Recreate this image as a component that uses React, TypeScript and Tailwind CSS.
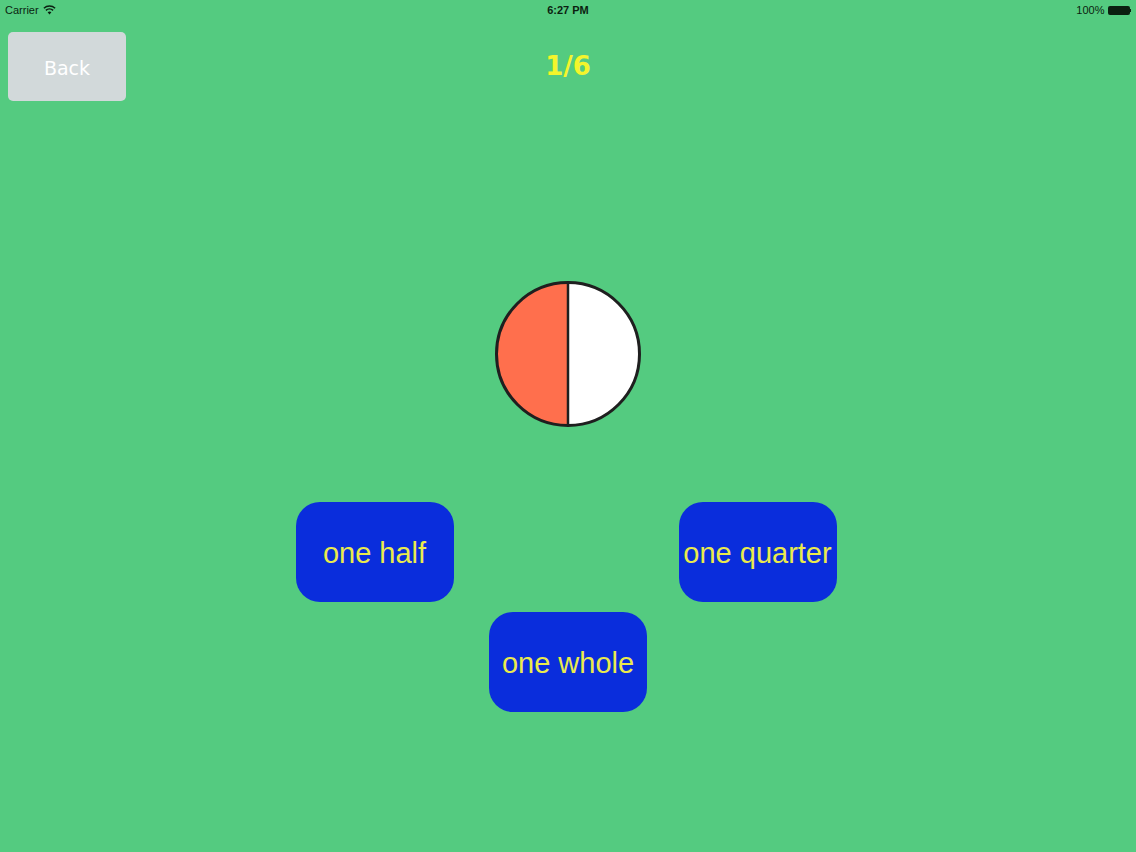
import React from 'react';

const choices = ['one half', 'one quarter'];

const StatusBar: React.FC = () => (
    <div className="h-[20px] grid grid-cols-[1fr_auto_1fr] items-center px-[5px] text-[11px] text-[#0b1f10] font-['Liberation_Sans',sans-serif]">
        <div className="flex items-center gap-[4px]">
            <span>Carrier</span>
            <svg width="13" height="10" viewBox="0 0 13 10">
                <path d="M6.5 9.5 L4.6 7.3 A3 3 0 0 1 8.4 7.3 Z" fill="#0b1f10" />
                <path d="M2.9 5.4 A5.3 5.3 0 0 1 10.1 5.4" stroke="#0b1f10" strokeWidth="1.5" fill="none" />
                <path d="M0.9 3.2 A8.2 8.2 0 0 1 12.1 3.2" stroke="#0b1f10" strokeWidth="1.5" fill="none" />
            </svg>
        </div>
        <div className="font-bold">6:27 PM</div>
        <div className="flex items-center justify-end gap-[3px]">
            <span>100%</span>
            <div className="flex items-center">
                <div className="w-[22px] h-[9px] bg-[#0b1f10] rounded-[2px]" />
                <div className="w-[1.5px] h-[3px] bg-[#0b1f10]" />
            </div>
        </div>
    </div>
);

const ChoiceButton: React.FC<{ label: string }> = ({ label }) => (
    <button className="w-[158px] h-[100px] pt-[4px] rounded-[24px] bg-[#0a2ddc] text-[#eaea4c] text-[29px] font-['Liberation_Sans',sans-serif] flex items-center justify-center whitespace-nowrap">
        {label}
    </button>
);

const App: React.FC = () => {
    return (
        <div className="w-[1136px] h-[852px] bg-[#54cb80] overflow-hidden">
            <StatusBar />

            {/* header */}
            <div className="grid grid-cols-[1fr_auto_1fr] items-start">
                <div>
                    <button className="ml-[8px] mt-[12px] w-[118px] h-[69px] pt-[3px] rounded-[5px] bg-[#d2d9da] text-white text-[19px] font-['DejaVu_Sans',sans-serif] flex items-center justify-center">
                        Back
                    </button>
                </div>
                <div className="mt-[32px] text-[26px] leading-[28px] font-bold text-[#f4f52c] font-['DejaVu_Sans',sans-serif]">
                    1/6
                </div>
                <div />
            </div>

            {/* fraction circle */}
            <div className="flex justify-center mt-[180px]">
                <svg width="146" height="146" viewBox="0 0 146 146">
                    <path d="M73 1.5 A71.5 71.5 0 0 0 73 144.5 Z" fill="#ff6f4d" />
                    <path d="M73 1.5 A71.5 71.5 0 0 1 73 144.5 Z" fill="#ffffff" />
                    <line x1="73" y1="1.5" x2="73" y2="144.5" stroke="#1f1f1f" strokeWidth="2.5" />
                    <circle cx="73" cy="73" r="71.5" fill="none" stroke="#1f1f1f" strokeWidth="3" />
                </svg>
            </div>

            {/* answers */}
            <div className="flex justify-center gap-[225px] mt-[75px] pr-[4px]">
                {choices.map((c) => (
                    <ChoiceButton key={c} label={c} />
                ))}
            </div>
            <div className="flex justify-center mt-[10px]">
                <ChoiceButton label="one whole" />
            </div>
        </div>
    );
};

export default App;
